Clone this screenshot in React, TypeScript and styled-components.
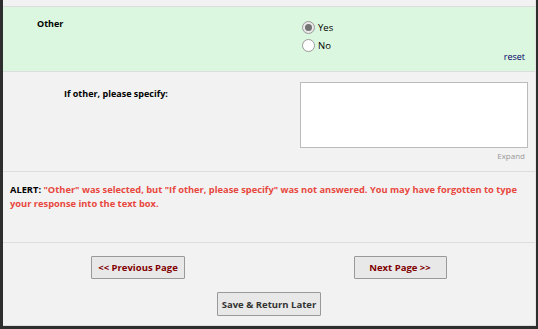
import React from 'react'
import styled, { createGlobalStyle } from 'styled-components'

const GlobalStyle = createGlobalStyle`
  html, body {
    margin: 0;
    padding: 0;
    background: #2e2e2e;
  }
  body {
    font-family: "Open Sans", "DejaVu Sans", sans-serif;
    font-size: 9.5px;
    color: #000;
  }
`

const Page = styled.div`
  margin-left: 3px;
  width: 532px;
  background: #f2f2f2;
  border-right: 1px solid #e4e4e4;
  border-bottom: 1px solid #ddd;
`

const TopStrip = styled.div`
  height: 6px;
  border-bottom: 1px solid #ddd;
`

const QuestionRow = styled.div<{ $highlight?: boolean; $height: number }>`
  display: grid;
  grid-template-columns: 297px 1fr;
  height: ${p => p.$height}px;
  background: ${p => (p.$highlight ? '#dbf7df' : '#f2f2f2')};
  border-bottom: 1px solid #ddd;
`

const Label = styled.div<{ $indent: number; $top: number }>`
  padding-left: ${p => p.$indent}px;
  padding-top: ${p => p.$top}px;
  font-size: 9px;
  font-weight: bold;
  line-height: 13px;
`

const AnswerCell = styled.div<{ $top: number }>`
  padding-top: ${p => p.$top}px;
  padding-right: 7px;
  display: flex;
  flex-direction: column;
`

const RadioOption = styled.label`
  display: flex;
  align-items: center;
  gap: 3px;
  height: 18px;
  margin-left: 2px;
  color: #000;
`

const RadioDot = styled.span<{ $checked?: boolean }>`
  box-sizing: border-box;
  width: 13px;
  height: 13px;
  border-radius: 50%;
  border: 1px solid #999;
  background: ${p => (p.$checked ? '#e9e9e9' : '#fff')};
  display: flex;
  align-items: center;
  justify-content: center;

  &::after {
    content: '';
    display: ${p => (p.$checked ? 'block' : 'none')};
    width: 7px;
    height: 7px;
    border-radius: 50%;
    background: #737373;
  }
`

const SmallLink = styled.div<{ $color: string; $size: number; $shift: number }>`
  align-self: flex-end;
  margin-top: ${p => p.$shift}px;
  margin-right: 3px;
  font-size: ${p => p.$size}px;
  color: ${p => p.$color};
`

const TextBox = styled.textarea`
  box-sizing: border-box;
  width: 228px;
  height: 66px;
  border: 1px solid #bbb;
  background: #fff;
  resize: none;
  margin: 0 0 3px 0;
  font-family: inherit;
`

const AlertRow = styled.div`
  box-sizing: border-box;
  height: 71px;
  padding: 11px 3px 0 7px;
  border-bottom: 1px solid #ddd;
  font-size: 9.3px;
  font-weight: bold;
  line-height: 14px;
  color: #e8473e;
`

const AlertTag = styled.span`
  color: #000;
`

const ButtonArea = styled.div`
  box-sizing: border-box;
  height: 82px;
  padding-top: 13px;
  display: flex;
  flex-direction: column;
  align-items: center;
  gap: 13px;
`

const NavRow = styled.div`
  box-sizing: border-box;
  display: grid;
  grid-template-columns: 1fr 1fr;
  width: 100%;
  padding: 0 4px;
  justify-items: center;
`

const Button = styled.button<{ $color: string; $width: number; $height: number }>`
  width: ${p => p.$width}px;
  height: ${p => p.$height}px;
  padding: 0;
  background: #e8e8e8;
  border: 1px solid #999;
  border-radius: 1px;
  font-family: inherit;
  font-size: 9.5px;
  font-weight: bold;
  color: ${p => p.$color};
`

export default function App() {
  return (
    <>
      <GlobalStyle />
      <Page>
        <TopStrip />
        <QuestionRow $highlight $height={64}>
          <Label $indent={34} $top={10}>Other</Label>
          <AnswerCell $top={11}>
            <RadioOption><RadioDot $checked />Yes</RadioOption>
            <RadioOption><RadioDot />No</RadioOption>
            <SmallLink $color="#000066" $size={9} $shift={-4}>reset</SmallLink>
          </AnswerCell>
        </QuestionRow>
        <QuestionRow $height={99}>
          <Label $indent={61} $top={15}>If other, please specify:</Label>
          <AnswerCell $top={10}>
            <TextBox />
            <SmallLink $color="#999" $size={8} $shift={-1}>Expand</SmallLink>
          </AnswerCell>
        </QuestionRow>
        <AlertRow>
          <AlertTag>ALERT:</AlertTag>{' '}
          <span>
            "Other" was selected, but "If other, please specify" was not answered. You may have
            forgotten to type your response into the text box.
          </span>
        </AlertRow>
        <ButtonArea>
          <NavRow>
            <Button $color="#800000" $width={94} $height={23}>&lt;&lt; Previous Page</Button>
            <Button $color="#800000" $width={93} $height={23}>Next Page &gt;&gt;</Button>
          </NavRow>
          <Button $color="#333" $width={104} $height={24}>Save &amp; Return Later</Button>
        </ButtonArea>
      </Page>
    </>
  )
}
